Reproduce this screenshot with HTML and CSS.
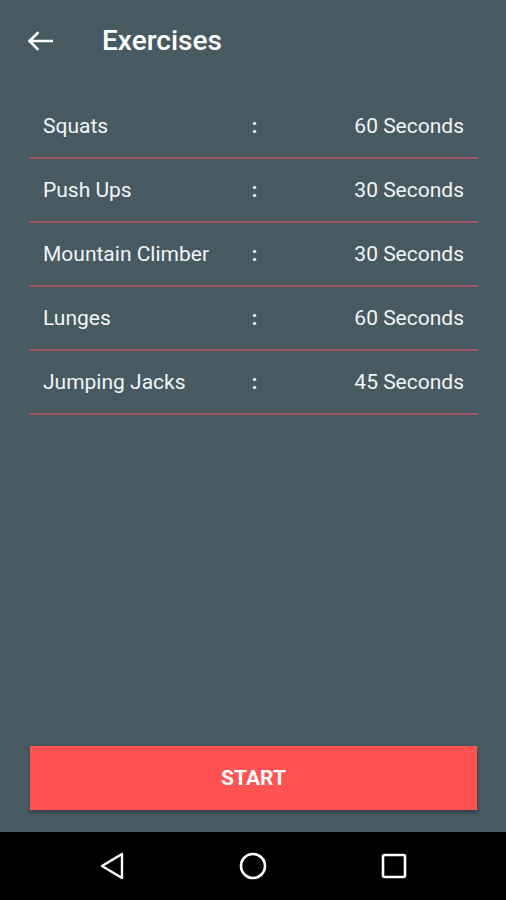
FILE: index.html
```html
<!DOCTYPE html>
<html>

<head>
  <meta charset="UTF-8">
  <title>Exercises</title>
  <link rel="stylesheet" href="styles.css">
</head>

<body>
  <div class="screen">
    <header class="toolbar">
      <svg class="back" width="26" height="20" viewBox="0 0 26 20">
        <path d="M25 10 H2.5 M10.5 2 L2.5 10 L10.5 18" fill="none" stroke="#fff" stroke-width="2.6" stroke-linecap="square"/>
      </svg>
      <h1>Exercises</h1>
    </header>

    <ul class="lista">
      <li><span class="nome">Squats</span><span class="sep">:</span><span class="tempo">60 Seconds</span></li>
      <li><span class="nome">Push Ups</span><span class="sep">:</span><span class="tempo">30 Seconds</span></li>
      <li><span class="nome">Mountain Climber</span><span class="sep">:</span><span class="tempo">30 Seconds</span></li>
      <li><span class="nome">Lunges</span><span class="sep">:</span><span class="tempo">60 Seconds</span></li>
      <li><span class="nome">Jumping Jacks</span><span class="sep">:</span><span class="tempo">45 Seconds</span></li>
    </ul>

    <div class="rodape">
      <button type="button" class="start">START</button>
    </div>
  </div>

  <nav class="navbar">
    <svg width="26" height="28" viewBox="0 0 26 28">
      <path d="M23 2 L3 14 L23 26 Z" fill="none" stroke="#fff" stroke-width="2.4" stroke-linejoin="round"/>
    </svg>
    <svg width="28" height="28" viewBox="0 0 28 28">
      <circle cx="14" cy="14" r="12" fill="none" stroke="#fff" stroke-width="2.6"/>
    </svg>
    <svg width="26" height="26" viewBox="0 0 26 26">
      <rect x="2" y="2" width="22" height="22" rx="1.5" fill="none" stroke="#fff" stroke-width="2.6"/>
    </svg>
  </nav>
</body>

</html>
```

FILE: styles.css
```css
body {
  margin: 0;
  font-family: Roboto, "Noto Sans", sans-serif;
  color: #fff;
  background-color: #475a62;
}

.screen {
  height: 832px;
  display: flex;
  flex-direction: column;
}

.toolbar {
  height: 82px;
  display: flex;
  align-items: center;
  padding: 0 0 0 27px;
  box-sizing: border-box;
}

.back {
  display: block;
}

h1 {
  margin: -2px 0 0 49px;
  font-size: 28px;
  font-weight: 500;
}

.lista {
  list-style: none;
  margin: 13px 28px 0 29px;
  padding: 0;
}

.lista li {
  height: 62px;
  display: grid;
  grid-template-columns: 1fr auto 1fr;
  align-items: center;
  padding: 0 14px;
  border-bottom: 2px solid #a1545f;
  font-size: 21px;
  color: #f2f4f5;
}

.sep {
  font-weight: 700;
  padding: 0 0 0 2px;
}

.tempo {
  text-align: right;
}

.rodape {
  margin-top: auto;
  padding: 0 29px 22px 30px;
}

.start {
  display: block;
  width: 100%;
  height: 64px;
  border: none;
  border-radius: 0;
  background-color: #ff5252;
  color: #fff;
  font-family: Roboto, "Noto Sans", sans-serif;
  font-size: 21px;
  font-weight: 700;
  box-shadow: 0 3px 4px rgba(0, 0, 0, 0.3);
}

.navbar {
  height: 68px;
  background-color: #000;
  display: flex;
  align-items: center;
  justify-content: center;
  gap: 114px;
}

.navbar svg {
  display: block;
}
```
